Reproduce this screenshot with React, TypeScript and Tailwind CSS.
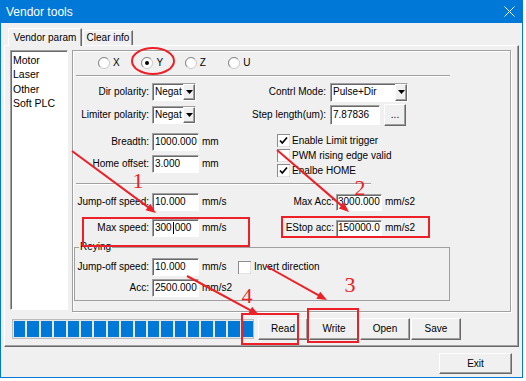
import React from "react";

const sunken =
  "bg-white border border-t-[#a0a0a0] border-l-[#a0a0a0] border-b-white border-r-white shadow-[inset_1px_1px_0_#696969]";
const raised =
  "bg-[#f0f0f0] border border-t-white border-l-white border-b-[#696969] border-r-[#696969] shadow-[inset_-1px_-1px_0_#a0a0a0]";

const RED = "#ec2026";

function Combo({ cls, value }: { cls: string; value: string }) {
  return (
    <div className={`${sunken} flex items-stretch ${cls}`}>
      <div className="flex-1 pl-[2px] flex items-center overflow-hidden whitespace-nowrap">{value}</div>
      <div className={`${raised} w-[12px] flex items-center justify-center`}>
        <svg width="7" height="4" viewBox="0 0 7 4">
          <path d="M0 0H7L3.5 4Z" fill="#000" />
        </svg>
      </div>
    </div>
  );
}

function Field({ cls, children }: { cls: string; children: React.ReactNode }) {
  return (
    <div className={`${sunken} flex items-center overflow-hidden whitespace-nowrap ${cls}`}>{children}</div>
  );
}

function Radio({ checked }: { checked?: boolean }) {
  return (
    <svg width="12" height="12" viewBox="0 0 12 12">
      <circle cx="6" cy="6" r="5.5" fill="#fff" stroke="#c8c8c8" />
      <path d="M2.1 9.9A5.5 5.5 0 0 1 9.9 2.1" fill="none" stroke="#8a8a8a" />
      {checked && <circle cx="6" cy="6" r="2" fill="#000" />}
    </svg>
  );
}

function Check({ checked }: { checked?: boolean }) {
  return (
    <svg width="13" height="13" viewBox="0 0 13 13">
      <rect x="0.5" y="0.5" width="12" height="12" fill="#fff" stroke="#8c8c8c" />
      <path d="M1 12.5H12.5V1" fill="none" stroke="#e3e3e3" />
      {checked && <path d="M3 6.5L5.3 9L10 3.5" fill="none" stroke="#000" strokeWidth="1.7" />}
    </svg>
  );
}

function Btn({ cls, children }: { cls: string; children: React.ReactNode }) {
  return <div className={`${raised} flex items-center justify-center ${cls}`}>{children}</div>;
}

function Arrow({ x1, y1, x2, y2 }: { x1: number; y1: number; x2: number; y2: number }) {
  const dx = x2 - x1;
  const dy = y2 - y1;
  const L = Math.hypot(dx, dy);
  const ux = dx / L;
  const uy = dy / L;
  const hl = 10;
  const hw = 4;
  const bx = x2 - ux * hl;
  const by = y2 - uy * hl;
  const pts = `${x2},${y2} ${bx - uy * hw},${by + ux * hw} ${bx + uy * hw},${by - ux * hw}`;
  return (
    <g>
      <line x1={x1} y1={y1} x2={bx + ux} y2={by + uy} stroke={RED} strokeWidth="2" />
      <polygon points={pts} fill={RED} />
    </g>
  );
}

export default function App() {
  return (
    <div className="w-[526px] h-[381px] bg-white relative overflow-hidden font-['Liberation_Sans',Arial,sans-serif] text-[10px] leading-[12px] text-black">
      <div className="w-[523px] h-[378px] flex flex-col">
        {/* Title bar */}
        <div className="h-[23px] bg-[#0078d7] text-white flex items-center justify-between pl-[6px] pr-[8px] text-[12px]">
          <span>Vendor tools</span>
          <svg width="11" height="11" viewBox="0 0 11 11">
            <path d="M0.5 0.5L10.5 10.5M10.5 0.5L0.5 10.5" stroke="#fff" strokeWidth="1" />
          </svg>
        </div>

        {/* Body */}
        <div className="flex-1 flex flex-col bg-[#f0f0f0] border-x border-b border-[#0078d7] px-[3px]">
          {/* Tabs */}
          <div className="h-[22px] flex items-end pl-[4px]">
            <div className="relative z-10 -mb-px h-[18px] w-[74px] flex items-center justify-center bg-[#f0f0f0] border border-b-0 border-t-white border-l-white border-r-[#696969] shadow-[inset_-1px_0_0_#a0a0a0]">
              Vendor param
            </div>
            <div className="h-[15px] w-[50px] ml-[1px] flex items-center justify-center border border-b-0 border-t-white border-l-white border-r-[#696969] shadow-[inset_-1px_0_0_#a0a0a0]">
              Clear info
            </div>
          </div>

          {/* Tab panel */}
          <div className="h-[302px] border border-t-white border-l-white border-b-[#696969] border-r-[#696969] shadow-[inset_-1px_-1px_0_#a0a0a0] flex flex-col pl-[5px] pt-[4px]">
            <div className="h-[262px] flex gap-[4px]">
              {/* List box */}
              <div className={`${sunken} w-[58px] h-[260px] pl-[2px] pt-[2px]`}>
                {["Motor", "Laser", "Other", "Soft PLC"].map((t) => (
                  <div key={t} className="h-[14.3px] leading-[14.3px] text-[10.5px]">
                    {t}
                  </div>
                ))}
              </div>

              {/* Inner panel */}
              <div className="w-[439px] h-[262px] border border-[#a0a0a0] shadow-[inset_1px_1px_0_#fff,1px_1px_0_#fff] flex flex-col whitespace-nowrap">
                {/* Radios */}
                <div className="mt-[2px] h-[20px] flex items-center pl-[25px]">
                  {["X", "Y", "Z", "U"].map((l, i) => (
                    <div key={l} className="w-[43.4px] flex items-center gap-[3px]">
                      <Radio checked={i === 1} />
                      <span>{l}</span>
                    </div>
                  ))}
                </div>
                <div className="mt-[2px] ml-[3px] w-[374px] h-[2px] border-t border-t-[#a0a0a0] border-b border-b-white" />

                {/* Row A */}
                <div className="mt-[5px] h-[20px] flex items-center">
                  <div className="w-[76px] text-right">Dir polarity:</div>
                  <Combo cls="ml-[3px] w-[44px] h-[18px]" value="Negat" />
                  <div className="w-[130px] text-right">Contrl Mode:</div>
                  <Combo cls="ml-[4px] w-[78px] h-[19px]" value="Pulse+Dir" />
                </div>

                {/* Row B */}
                <div className="mt-[2px] h-[22px] flex items-center">
                  <div className="w-[76px] text-right">Limiter polarity:</div>
                  <Combo cls="ml-[3px] w-[44px] h-[18px]" value="Negat" />
                  <div className="w-[130px] text-right">Step length(um):</div>
                  <Field cls="ml-[4px] w-[50px] h-[20px] pl-[2px]">7.87836</Field>
                  <Btn cls="ml-[4px] w-[22px] h-[22px]">...</Btn>
                </div>

                {/* Block */}
                <div className="mt-[5px] h-[48px] flex">
                  <div className="w-[204px] flex flex-col pt-[1px] gap-[2px]">
                    <div className="h-[20px] flex items-center">
                      <div className="w-[76px] text-right">Breadth:</div>
                      <Field cls="ml-[3px] w-[47px] h-[18px] pl-[2px]">1000.000</Field>
                      <span className="ml-[3px]">mm</span>
                    </div>
                    <div className="h-[20px] flex items-center">
                      <div className="w-[76px] text-right">Home offset:</div>
                      <Field cls="ml-[3px] w-[47px] h-[18px] pl-[2px]">3.000</Field>
                      <span className="ml-[3px]">mm</span>
                    </div>
                  </div>
                  <div className="flex flex-col pt-[2px]">
                    <div className="h-[15px] flex items-center gap-[2px]">
                      <Check checked />
                      <span>Enable Limit trigger</span>
                    </div>
                    <div className="h-[15px] flex items-center gap-[2px]">
                      <Check />
                      <span>PWM rising edge valid</span>
                    </div>
                    <div className="h-[15px] flex items-center gap-[2px]">
                      <Check checked />
                      <span>Enalbe HOME</span>
                    </div>
                  </div>
                </div>

                <div className="mt-[4px] ml-[3px] w-[295px] h-[2px] border-t border-t-[#a0a0a0] border-b border-b-white" />

                {/* Speed rows */}
                <div className="mt-[7px] h-[20px] flex items-center">
                  <div className="w-[211px] flex items-center">
                    <div className="w-[76px] text-right">Jump-off speed:</div>
                    <Field cls="ml-[3px] w-[47px] h-[18px] pl-[2px]">10.000</Field>
                    <span className="ml-[3px]">mm/s</span>
                  </div>
                  <div className="w-[50px] text-right">Max Acc:</div>
                  <Field cls="ml-[2px] w-[46px] h-[17px] pl-[1px]">3000.000</Field>
                  <span className="ml-[3px]">mm/s2</span>
                </div>
                <div className="mt-[6px] h-[20px] flex items-center">
                  <div className="w-[211px] flex items-center">
                    <div className="w-[76px] text-right">Max speed:</div>
                    <Field cls="ml-[3px] w-[47px] h-[18px] pl-[2px]">
                      300
                      <span className="inline-block w-[1px] h-[12px] bg-black mx-[1px]" />
                      000
                    </Field>
                    <span className="ml-[3px]">mm/s</span>
                  </div>
                  <div className="w-[50px] text-right">EStop acc:</div>
                  <Field cls="ml-[2px] w-[46px] h-[17px] pl-[1px]">150000.0</Field>
                  <span className="ml-[3px]">mm/s2</span>
                </div>

                {/* Reying group */}
                <fieldset className="mt-[3px] ml-[1px] w-[376px] h-[60px] border border-[#a0a0a0]">
                  <legend className="ml-[4px] px-[1px] leading-[12px]">Reying</legend>
                  <div className="mt-[4px] h-[20px] flex items-center">
                    <div className="w-[74px] text-right">Jump-off speed:</div>
                    <Field cls="ml-[3px] w-[47px] h-[18px] pl-[2px]">10.000</Field>
                    <span className="ml-[3px] w-[36px]">mm/s</span>
                    <div className="flex items-center gap-[3px]">
                      <Check />
                      <span>Invert direction</span>
                    </div>
                  </div>
                  <div className="mt-[1px] h-[20px] flex items-center">
                    <div className="w-[74px] text-right">Acc:</div>
                    <Field cls="ml-[3px] w-[47px] h-[18px] pl-[2px]">2500.000</Field>
                    <span className="ml-[3px]">mm/s2</span>
                  </div>
                </fieldset>
              </div>
            </div>

            {/* Progress + buttons */}
            <div className="mt-[6px] h-[22px] flex items-center">
              <div className="ml-[2px] w-[242px] h-[20px] bg-[#e6e6e6] border border-[#bcbcbc] flex items-center pl-[1px] gap-[2px]">
                {Array.from({ length: 18 }).map((_, i) => (
                  <div key={i} className="w-[11.4px] h-[16px] bg-[#0078d7]" />
                ))}
              </div>
              <div className="ml-[4px] flex gap-[1px]">
                <Btn cls="w-[50px] h-[22px]">Read</Btn>
                <Btn cls="w-[50px] h-[22px]">Write</Btn>
                <Btn cls="w-[50px] h-[22px]">Open</Btn>
                <Btn cls="w-[50px] h-[22px]">Save</Btn>
              </div>
            </div>
          </div>

          {/* Exit */}
          <div className="mt-[6px] flex justify-end pr-[7px]">
            <Btn cls="w-[73px] h-[21px]">Exit</Btn>
          </div>
        </div>
      </div>

      {/* Annotations */}
      <svg className="absolute inset-0 pointer-events-none" width="526" height="381" viewBox="0 0 526 381">
        <ellipse cx="153" cy="61" rx="21" ry="13" fill="none" stroke={RED} strokeWidth="2" />
        <rect x="83" y="218" width="166" height="28" fill="none" stroke={RED} strokeWidth="2" />
        <rect x="282" y="217" width="147" height="20" fill="none" stroke={RED} strokeWidth="2" />
        <rect x="308" y="309" width="50" height="33" fill="none" stroke={RED} strokeWidth="2" />
        <rect x="242" y="314" width="56" height="30" fill="none" stroke={RED} strokeWidth="2" />
        <Arrow x1={72} y1={151} x2={156} y2={213} />
        <Arrow x1={277} y1={150} x2={349} y2={212} />
        <Arrow x1={266} y1={266} x2={327} y2={300} />
        <Arrow x1={187} y1={276} x2={259} y2={315} />
        <g fill={RED} fontFamily="'Liberation Serif', serif" fontSize="22" textAnchor="middle">
          <text x="138" y="188">1</text>
          <text x="360" y="195">2</text>
          <text x="350" y="292">3</text>
          <text x="247" y="303">4</text>
        </g>
      </svg>
    </div>
  );
}
